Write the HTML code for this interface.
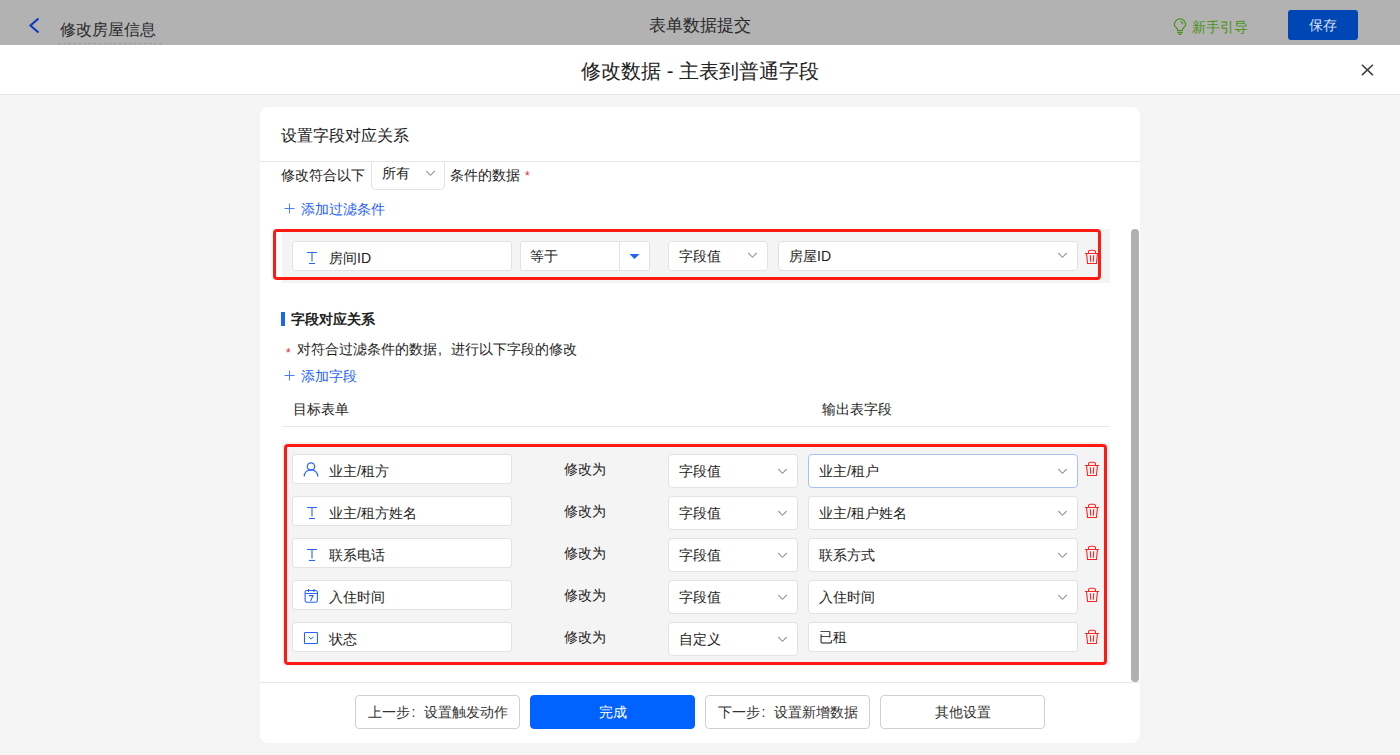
<!DOCTYPE html>
<html><head><meta charset="utf-8">
<style>
*{box-sizing:border-box;margin:0;padding:0}
html,body{width:1400px;height:755px;overflow:hidden;background:#f5f5f5;font-family:"Liberation Sans",sans-serif;color:#1c1c1c;font-size:14px}
.abs{position:absolute}
.t{position:absolute;white-space:nowrap;line-height:20px}
#topbar{position:absolute;left:0;top:0;width:1400px;height:45px;background:#b2b2b2}
#mhead{position:absolute;left:0;top:45px;width:1400px;height:50px;background:#fff;border-bottom:1px solid #e4e4e4}
#card{position:absolute;left:260px;top:107px;width:880px;height:636px;background:#fff;border-radius:8px;overflow:hidden}
.inp{position:absolute;background:#fff;border:1px solid #e2e2e2;border-radius:3px}
.sel{position:absolute;background:#fff;border:1px solid #e2e2e2;border-radius:4px}
.chev{position:absolute;width:11px;height:7px}
.red{position:absolute;border:3px solid #ff1a14;border-radius:4px}
.btn{position:absolute;top:695px;width:165px;height:34px;border:1px solid #d0d0d0;border-radius:4px;background:#fff;text-align:center;line-height:32px;font-size:14px;color:#333}
</style></head><body>
<div id="topbar">
  <svg class="abs" style="left:28px;top:17px" width="13" height="17" viewBox="0 0 13 17"><path d="M10.5 1.5 L2.5 8.5 L10.5 15.5" fill="none" stroke="#0a3cbc" stroke-width="2.1"/></svg>
  <div class="t" style="left:60px;top:20px;font-size:16px;line-height:20px;color:#2a2a2a">修改房屋信息</div>
  <div class="abs" style="left:58px;top:43px;width:104px;border-top:1px dashed #9e9e9e"></div>
  <div class="t" style="left:649px;top:16px;font-size:17px;color:#2a2a2a">表单数据提交</div>
  <svg class="abs" style="left:1172px;top:17px" width="16" height="19" viewBox="0 0 16 19"><path d="M5.6 13.6 V12.6 C5.6 11.2 2.3 9.8 2.3 7.6 A5.7 5.7 0 0 1 13.7 7.6 C13.7 9.8 10.4 11.2 10.4 12.6 V13.6 Z" fill="none" stroke="#4a9216" stroke-width="1.25"/><path d="M5.3 15.6 H10.7 M6.6 17.4 H9.4" stroke="#4a9216" stroke-width="1.2"/><path d="M8.6 4.6 A3 3 0 0 1 10.8 7.2" fill="none" stroke="#4a9216" stroke-width="1.2"/></svg>
  <div class="t" style="left:1192px;top:17px;font-size:14px;color:#4a9216">新手引导</div>
  <div class="abs" style="left:1288px;top:10px;width:70px;height:30px;background:#0046b4;border-radius:3px;color:#d9e2f2;text-align:center;line-height:30px;font-size:14px">保存</div>
</div>
<div id="mhead">
  <div class="t" style="left:0;width:1400px;text-align:center;top:14px;font-size:20px;line-height:24px;color:#222">修改数据 - 主表到普通字段</div>
  <svg class="abs" style="left:1360px;top:18px" width="15" height="15" viewBox="0 0 15 15"><path d="M1.9 1.7 L12.9 12.1 M12.9 1.7 L1.9 12.1" stroke="#3c3c3c" stroke-width="1.5"/></svg>
</div>
<div id="card"></div>
<div class="t" style="left:281px;top:126px;font-size:16px;color:#222">设置字段对应关系</div>
<div class="abs" style="left:260px;top:161px;width:880px;height:1px;background:#e8e8e8"></div>
<div class="abs" style="left:260px;top:162px;width:880px;height:520px;overflow:hidden">
<div class="abs" style="left:-260px;top:-162px;width:1400px;height:755px">
  <div class="t" style="left:281px;top:165px">修改符合以下</div>
  <div class="sel" style="left:371px;top:159px;width:74px;height:31px"></div>
  <div class="t" style="left:382px;top:163px">所有</div>
  <svg class="abs" style="left:425px;top:170px" width="11" height="7" viewBox="0 0 11 7"><path d="M1.3 1 L5.5 5.3 L9.7 1" fill="none" stroke="#979797" stroke-width="1.1"/></svg>
  <div class="t" style="left:450px;top:165px">条件的数据</div>
  <div class="t" style="left:525px;top:166px;color:#f5222d;font-size:12px">*</div>
  <svg class="abs" style="left:284px;top:203px" width="11" height="11" viewBox="0 0 11 11"><path d="M5.5 0.5 V10.5 M0.5 5.5 H10.5" stroke="#4d7bff" stroke-width="1"/></svg>
  <div class="t" style="left:301px;top:199px;color:#1f5fff">添加过滤条件</div>

  <div class="abs" style="left:282px;top:229px;width:828px;height:54px;background:#f4f4f4"></div>
  <div class="inp" style="left:292px;top:241px;width:220px;height:30px"></div>
  <svg class="abs" style="left:306px;top:251px" width="12" height="14" viewBox="0 0 12 14"><path d="M1 1.5 H11 M6 1.5 V10.5 M3 12.5 H9" fill="none" stroke="#2764ff" stroke-width="1.1"/></svg>
  <div class="t" style="left:329px;top:248px">房间ID</div>
  <div class="inp" style="left:520px;top:241px;width:130px;height:30px;border-radius:2px"></div>
  <div class="abs" style="left:619px;top:242px;width:1px;height:28px;background:#e2e2e2"></div>
  <svg class="abs" style="left:629px;top:253px" width="11" height="7" viewBox="0 0 11 7"><path d="M0.5 1 H10.5 L5.5 6 Z" fill="#1c64f2"/></svg>
  <div class="t" style="left:530px;top:246px">等于</div>
  <div class="sel" style="left:668px;top:241px;width:100px;height:30px"></div>
  <div class="t" style="left:679px;top:246px">字段值</div>
  <svg class="abs" style="left:747px;top:252px" width="11" height="7" viewBox="0 0 11 7"><path d="M1.3 1 L5.5 5.3 L9.7 1" fill="none" stroke="#979797" stroke-width="1.1"/></svg>
  <div class="sel" style="left:778px;top:241px;width:300px;height:30px"></div>
  <div class="t" style="left:789px;top:246px">房屋ID</div>
  <svg class="abs" style="left:1057px;top:252px" width="11" height="7" viewBox="0 0 11 7"><path d="M1.3 1 L5.5 5.3 L9.7 1" fill="none" stroke="#979797" stroke-width="1.1"/></svg>
  <svg class="abs" style="left:1084px;top:249px" width="16" height="16" viewBox="0 0 16 16"><path d="M1 4.5 H15 M4.5 4.5 V3 A1.8 1.8 0 0 1 6.3 1.2 H9.7 A1.8 1.8 0 0 1 11.5 3 V4.5 M2.5 4.5 L3.6 14.5 H12.4 L13.5 4.5 M6.3 6.3 L6.7 12.8 M9.7 6.3 L9.3 12.8" fill="none" stroke="#fa2424" stroke-width="1.1"/></svg>
  <div class="red" style="left:273px;top:229px;width:828px;height:51px"></div>

  <div class="abs" style="left:281px;top:312px;width:4px;height:14px;background:#1c64f2"></div>
  <div class="t" style="left:291px;top:309px;font-weight:bold;color:#222">字段对应关系</div>
  <div class="t" style="left:286px;top:343px;color:#f5222d;font-size:12px">*</div>
  <div class="t" style="left:297px;top:339px">对符合过滤条件的数据<span style="display:inline-block;width:14px;padding-left:1px">,</span>进行以下字段的修改</div>
  <svg class="abs" style="left:284px;top:370px" width="11" height="11" viewBox="0 0 11 11"><path d="M5.5 0.5 V10.5 M0.5 5.5 H10.5" stroke="#4d7bff" stroke-width="1"/></svg>
  <div class="t" style="left:301px;top:366px;color:#1f5fff">添加字段</div>
  <div class="t" style="left:293px;top:399px">目标表单</div>
  <div class="t" style="left:822px;top:399px">输出表字段</div>
  <div class="abs" style="left:282px;top:426px;width:828px;height:1px;background:#e8e8e8"></div>

  <div class="abs" style="left:282px;top:442px;width:828px;height:224px;background:#f4f4f4"></div>
  <div class="inp" style="left:292px;top:454px;width:220px;height:30px"></div>
  <svg class="abs" style="left:303px;top:462px" width="16" height="16" viewBox="0 0 16 16"><circle cx="8" cy="4.5" r="3.7" fill="none" stroke="#2764ff" stroke-width="1.2"/><path d="M1.2 14.5 A6.8 6.8 0 0 1 14.8 14.5" fill="none" stroke="#2764ff" stroke-width="1.2"/></svg>
  <div class="t" style="left:329px;top:461px">业主/租方</div>
  <div class="t" style="left:564px;top:459px">修改为</div>
  <div class="sel" style="left:668px;top:454px;width:130px;height:34px"></div>
  <div class="t" style="left:679px;top:461px">字段值</div>
  <svg class="abs" style="left:777px;top:468px" width="11" height="7" viewBox="0 0 11 7"><path d="M1.3 1 L5.5 5.3 L9.7 1" fill="none" stroke="#979797" stroke-width="1.1"/></svg>
  <div class="sel" style="left:808px;top:454px;width:270px;height:34px;border-color:#a8c2f0"></div>
  <svg class="abs" style="left:1057px;top:468px" width="11" height="7" viewBox="0 0 11 7"><path d="M1.3 1 L5.5 5.3 L9.7 1" fill="none" stroke="#979797" stroke-width="1.1"/></svg>
  <div class="t" style="left:819px;top:461px">业主/租户</div>
  <svg class="abs" style="left:1084px;top:461px" width="16" height="16" viewBox="0 0 16 16"><path d="M1 4.5 H15 M4.5 4.5 V3 A1.8 1.8 0 0 1 6.3 1.2 H9.7 A1.8 1.8 0 0 1 11.5 3 V4.5 M2.5 4.5 L3.6 14.5 H12.4 L13.5 4.5 M6.3 6.3 L6.7 12.8 M9.7 6.3 L9.3 12.8" fill="none" stroke="#fa2424" stroke-width="1.1"/></svg>
  <div class="inp" style="left:292px;top:496px;width:220px;height:30px"></div>
  <svg class="abs" style="left:306px;top:506px" width="12" height="14" viewBox="0 0 12 14"><path d="M1 1.5 H11 M6 1.5 V10.5 M3 12.5 H9" fill="none" stroke="#2764ff" stroke-width="1.1"/></svg>
  <div class="t" style="left:329px;top:503px">业主/租方姓名</div>
  <div class="t" style="left:564px;top:501px">修改为</div>
  <div class="sel" style="left:668px;top:496px;width:130px;height:34px"></div>
  <div class="t" style="left:679px;top:503px">字段值</div>
  <svg class="abs" style="left:777px;top:510px" width="11" height="7" viewBox="0 0 11 7"><path d="M1.3 1 L5.5 5.3 L9.7 1" fill="none" stroke="#979797" stroke-width="1.1"/></svg>
  <div class="sel" style="left:808px;top:496px;width:270px;height:34px;border-color:#e2e2e2"></div>
  <svg class="abs" style="left:1057px;top:510px" width="11" height="7" viewBox="0 0 11 7"><path d="M1.3 1 L5.5 5.3 L9.7 1" fill="none" stroke="#979797" stroke-width="1.1"/></svg>
  <div class="t" style="left:819px;top:503px">业主/租户姓名</div>
  <svg class="abs" style="left:1084px;top:503px" width="16" height="16" viewBox="0 0 16 16"><path d="M1 4.5 H15 M4.5 4.5 V3 A1.8 1.8 0 0 1 6.3 1.2 H9.7 A1.8 1.8 0 0 1 11.5 3 V4.5 M2.5 4.5 L3.6 14.5 H12.4 L13.5 4.5 M6.3 6.3 L6.7 12.8 M9.7 6.3 L9.3 12.8" fill="none" stroke="#fa2424" stroke-width="1.1"/></svg>
  <div class="inp" style="left:292px;top:538px;width:220px;height:30px"></div>
  <svg class="abs" style="left:306px;top:548px" width="12" height="14" viewBox="0 0 12 14"><path d="M1 1.5 H11 M6 1.5 V10.5 M3 12.5 H9" fill="none" stroke="#2764ff" stroke-width="1.1"/></svg>
  <div class="t" style="left:329px;top:545px">联系电话</div>
  <div class="t" style="left:564px;top:543px">修改为</div>
  <div class="sel" style="left:668px;top:538px;width:130px;height:34px"></div>
  <div class="t" style="left:679px;top:545px">字段值</div>
  <svg class="abs" style="left:777px;top:552px" width="11" height="7" viewBox="0 0 11 7"><path d="M1.3 1 L5.5 5.3 L9.7 1" fill="none" stroke="#979797" stroke-width="1.1"/></svg>
  <div class="sel" style="left:808px;top:538px;width:270px;height:34px;border-color:#e2e2e2"></div>
  <svg class="abs" style="left:1057px;top:552px" width="11" height="7" viewBox="0 0 11 7"><path d="M1.3 1 L5.5 5.3 L9.7 1" fill="none" stroke="#979797" stroke-width="1.1"/></svg>
  <div class="t" style="left:819px;top:545px">联系方式</div>
  <svg class="abs" style="left:1084px;top:545px" width="16" height="16" viewBox="0 0 16 16"><path d="M1 4.5 H15 M4.5 4.5 V3 A1.8 1.8 0 0 1 6.3 1.2 H9.7 A1.8 1.8 0 0 1 11.5 3 V4.5 M2.5 4.5 L3.6 14.5 H12.4 L13.5 4.5 M6.3 6.3 L6.7 12.8 M9.7 6.3 L9.3 12.8" fill="none" stroke="#fa2424" stroke-width="1.1"/></svg>
  <div class="inp" style="left:292px;top:580px;width:220px;height:30px"></div>
  <svg class="abs" style="left:303px;top:588px" width="16" height="16" viewBox="0 0 16 16"><rect x="2.1" y="2.5" width="12.3" height="11.7" rx="1.6" fill="none" stroke="#2764ff" stroke-width="1.1"/><path d="M2.1 5.5 H14.4 M5.5 1 V4 M11 1 V4 M6 7.6 H10 L7.6 13" fill="none" stroke="#2764ff" stroke-width="1.1"/></svg>
  <div class="t" style="left:329px;top:587px">入住时间</div>
  <div class="t" style="left:564px;top:585px">修改为</div>
  <div class="sel" style="left:668px;top:580px;width:130px;height:34px"></div>
  <div class="t" style="left:679px;top:587px">字段值</div>
  <svg class="abs" style="left:777px;top:594px" width="11" height="7" viewBox="0 0 11 7"><path d="M1.3 1 L5.5 5.3 L9.7 1" fill="none" stroke="#979797" stroke-width="1.1"/></svg>
  <div class="sel" style="left:808px;top:580px;width:270px;height:34px;border-color:#e2e2e2"></div>
  <svg class="abs" style="left:1057px;top:594px" width="11" height="7" viewBox="0 0 11 7"><path d="M1.3 1 L5.5 5.3 L9.7 1" fill="none" stroke="#979797" stroke-width="1.1"/></svg>
  <div class="t" style="left:819px;top:587px">入住时间</div>
  <svg class="abs" style="left:1084px;top:587px" width="16" height="16" viewBox="0 0 16 16"><path d="M1 4.5 H15 M4.5 4.5 V3 A1.8 1.8 0 0 1 6.3 1.2 H9.7 A1.8 1.8 0 0 1 11.5 3 V4.5 M2.5 4.5 L3.6 14.5 H12.4 L13.5 4.5 M6.3 6.3 L6.7 12.8 M9.7 6.3 L9.3 12.8" fill="none" stroke="#fa2424" stroke-width="1.1"/></svg>
  <div class="inp" style="left:292px;top:622px;width:220px;height:30px"></div>
  <svg class="abs" style="left:303px;top:631px" width="16" height="16" viewBox="0 0 16 16"><rect x="1.5" y="1.5" width="13" height="11" rx="0.8" fill="none" stroke="#2764ff" stroke-width="1.1"/><path d="M5.6 5.6 L8.1 8.1 L10.6 5.6" fill="none" stroke="#2764ff" stroke-width="1"/></svg>
  <div class="t" style="left:329px;top:629px">状态</div>
  <div class="t" style="left:564px;top:627px">修改为</div>
  <div class="sel" style="left:668px;top:622px;width:130px;height:34px"></div>
  <div class="t" style="left:679px;top:629px">自定义</div>
  <svg class="abs" style="left:777px;top:636px" width="11" height="7" viewBox="0 0 11 7"><path d="M1.3 1 L5.5 5.3 L9.7 1" fill="none" stroke="#979797" stroke-width="1.1"/></svg>
  <div class="inp" style="left:808px;top:622px;width:270px;height:30px"></div>
  <div class="t" style="left:819px;top:627px">已租</div>
  <svg class="abs" style="left:1084px;top:629px" width="16" height="16" viewBox="0 0 16 16"><path d="M1 4.5 H15 M4.5 4.5 V3 A1.8 1.8 0 0 1 6.3 1.2 H9.7 A1.8 1.8 0 0 1 11.5 3 V4.5 M2.5 4.5 L3.6 14.5 H12.4 L13.5 4.5 M6.3 6.3 L6.7 12.8 M9.7 6.3 L9.3 12.8" fill="none" stroke="#fa2424" stroke-width="1.1"/></svg>
  <div class="red" style="left:284px;top:444px;width:823px;height:221px"></div>
</div></div>
<div class="abs" style="left:1131px;top:229px;width:8px;height:453px;background:#b0b0b0;border-radius:4px"></div>
<div class="abs" style="left:260px;top:682px;width:880px;height:1px;background:#e8e8e8"></div>
<div class="btn" style="left:355px">上一步<span style="display:inline-block;width:14px;text-align:left;padding-left:2px">:</span>设置触发动作</div>
<div class="btn" style="left:530px;background:#0062ff;border-color:#0062ff;color:#fff">完成</div>
<div class="btn" style="left:705px">下一步<span style="display:inline-block;width:14px;text-align:left;padding-left:2px">:</span>设置新增数据</div>
<div class="btn" style="left:880px">其他设置</div>

</body></html>
